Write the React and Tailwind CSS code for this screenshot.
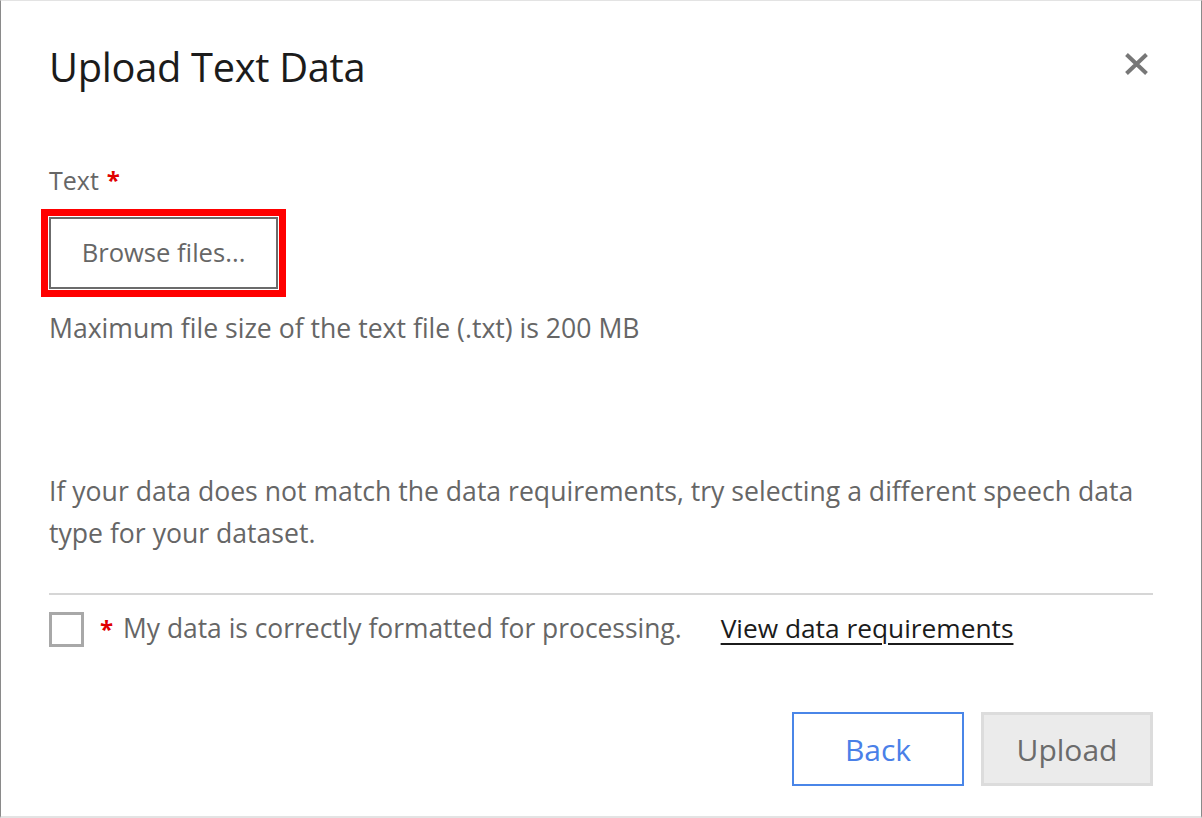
import React from "react";

export default function App() {
  const font = { fontFamily: '"Open Sans", "Noto Sans", sans-serif' };
  return (
    <div
      className="w-[1202px] h-[818px] bg-white border-l border-l-[#8a8a8a] border-r border-r-[#8a8a8a] border-t border-t-[#e3e3e3] border-b-2 border-b-[#e3e3e3] flex flex-col pl-[48px] pr-[48px] text-[#666666]"
      style={font}
    >
      <div className="flex items-center justify-between pt-[36px] h-[96px]">
        <h1 className="text-[39.8px] leading-[56px] text-[#1b1b1b] tracking-[-0.3px]">Upload Text Data</h1>
        <button className="w-[30px] h-[30px] flex items-center justify-center mr-[2px] -mt-[6px]">
          <svg width="23" height="22" viewBox="0 0 23 22">
            <path d="M1.5 1.5 L21.5 20.5 M21.5 1.5 L1.5 20.5" stroke="#777777" strokeWidth="4" strokeLinecap="butt" />
          </svg>
        </button>
      </div>

      <div className="mt-[65px] text-[25px] leading-[36px] flex items-center gap-[8px]">
        <span>Text</span>
        <span className="text-[#e00000] font-bold text-[24px]">*</span>
      </div>

      <div className="mt-[19px]">
        <button className="w-[229px] h-[72px] border-2 border-[#6b6b6b] outline-[7px] outline-solid outline-[#ff0000] outline-offset-[1px] text-[25.6px] text-[#666666]">
          Browse files...
        </button>
      </div>

      <p className="mt-[21px] text-[26.6px] leading-[36px]">
        Maximum file size of the text file (.txt) is 200 MB
      </p>

      <p className="mt-[124px] text-[26.6px] leading-[42px] w-[1104px]">
        If your data does not match the data requirements, try selecting a different speech data type for your dataset.
      </p>

      <div className="mt-[39px] h-[2px] bg-[#d6d6d6] w-[1104px]" />

      <div className="mt-[17px] flex items-center">
        <div className="w-[35px] h-[35px] border-[3px] border-[#a8a8a8] bg-white" />
        <span className="ml-[16px] text-[#e00000] font-bold text-[24px] -mt-[2px]">*</span>
        <span className="ml-[10px] text-[26.4px] leading-[36px] -mt-[3px]">My data is correctly formatted for processing.</span>
        <a className="ml-[39px] text-[26.3px] leading-[36px] text-[#1b1b1b] underline underline-offset-[5px] decoration-[2px] -mt-[3px]">
          View data requirements
        </a>
      </div>

      <div className="mt-[65px] flex justify-end gap-[17px] w-[1104px]">
        <button className="w-[172px] h-[74px] border-2 border-[#4a86e8] bg-white text-[30px] text-[#4a80e8]">
          Back
        </button>
        <button className="w-[172px] h-[74px] border-[3px] border-[#dcdcdc] bg-[#ebebeb] text-[30px] text-[#6b6b6b]">
          Upload
        </button>
      </div>
    </div>
  );
}
